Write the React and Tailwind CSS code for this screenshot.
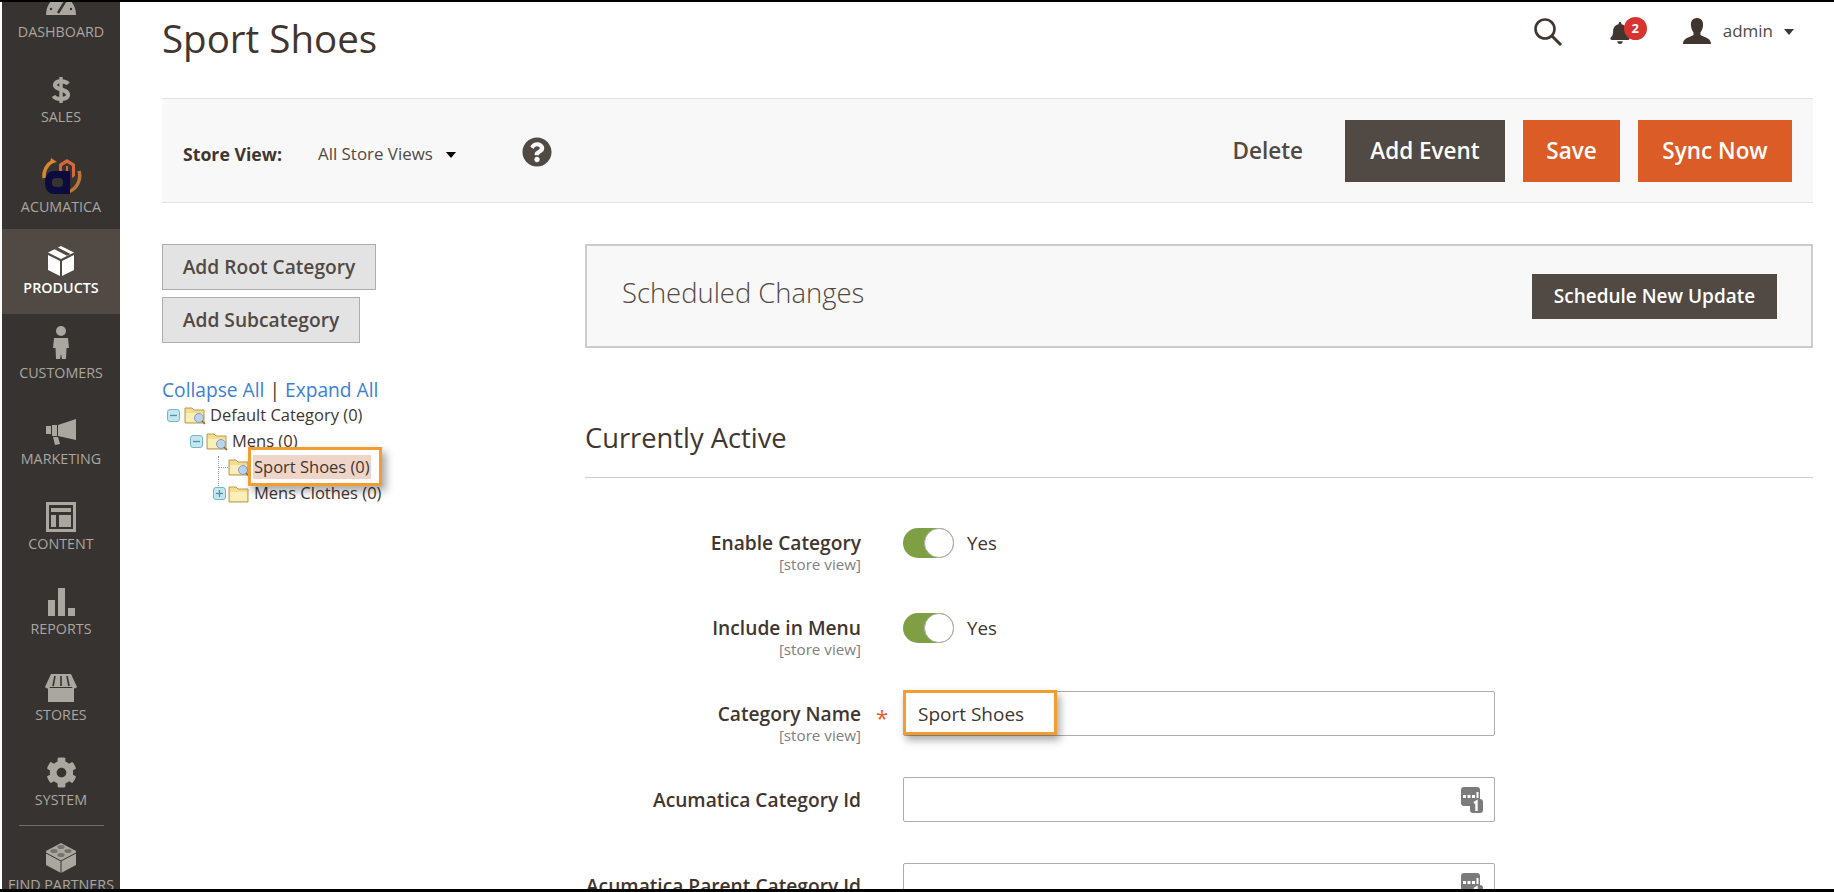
import React from 'react';
import { FaBell, FaCog, FaQuestionCircle } from 'react-icons/fa';

const GRAY = '#aaa6a0';

// Sidebar drawings
const Gauge = () => (
  <svg width="32" height="36" viewBox="0 0 32 36">
    <path d="M1 28 C1 18 7 10 16 10 C25 10 31 18 31 28 Z" fill={GRAY} />
    <path d="M13 26 L21 13" stroke="#373330" strokeWidth="2.5" />
    <circle cx="6" cy="22" r="1.2" fill="#373330" />
    <circle cx="26" cy="22" r="1.2" fill="#373330" />
  </svg>
);

const Dollar = () => (
  <svg width="20" height="30" viewBox="0 0 20 30">
    <path d="M17 9 C15 6 5 5 4 9.5 C3 15 17 13.5 17 20 C17 25 5 25 2.5 21" fill="none" stroke={GRAY} strokeWidth="4.2" />
    <path d="M10 2 V28" stroke={GRAY} strokeWidth="3.4" />
  </svg>
);

const AcumaticaLogo = () => (
  <svg width="42" height="40" viewBox="0 0 42 40">
    <path d="M4 22 A17 17 0 0 1 13 5" fill="none" stroke="#d9862f" strokeWidth="3.5" />
    <path d="M11 2 L17 6 L10 8 Z" fill="#d9862f" />
    <path d="M39 15 A17 17 0 0 1 28 36" fill="none" stroke="#b9783a" strokeWidth="3.5" />
    <path d="M19 8 L27 3 L35 8 V20 L32 22 V10 L27 7 L22 10 V20 L19 18 Z" fill="#d5673a" />
    <path d="M26 10 V24 L28 23 V10 Z" fill="#d5673a" />
    <path d="M14 15 H30 V38 H14 C8 38 5 33 5 27 C5 20 8 15 14 15 Z" fill="#0d0b3e" />
    <rect x="12" y="22" width="11" height="9" rx="4" fill="#373330" />
  </svg>
);

const Box = () => (
  <svg width="28" height="30" viewBox="0 0 28 30">
    <path d="M14 0 L27 6.5 L14 13 L1 6.5 Z" fill="#fff" />
    <path d="M7 3 L20 9.8 L23.5 8 L10.5 1.3 Z" fill="#514943" />
    <path d="M1 9 L13 15 V30 L1 24 Z" fill="#fff" />
    <path d="M15 15 L27 9 V24 L15 30 Z" fill="#fff" />
  </svg>
);

const Person = () => (
  <svg width="18" height="33" viewBox="0 0 18 33" className="mb-[8px]">
    <circle cx="9" cy="5" r="5" fill={GRAY} />
    <path d="M2 12 H16 L17 22 H14.5 L14 33 H10 L9 28 L8 33 H4 L3.5 22 H1 Z" fill={GRAY} />
  </svg>
);

const Megaphone = () => (
  <svg width="30" height="26" viewBox="0 0 30 26">
    <path d="M30 0 V21 L12 17 V6 Z" fill={GRAY} />
    <rect x="0" y="7" width="5" height="8" fill={GRAY} />
    <rect x="6" y="6" width="5" height="11" fill={GRAY} />
    <path d="M7 18 H12 L14 25 L9 26 Z" fill={GRAY} />
  </svg>
);

const Layout = () => (
  <svg width="30" height="30" viewBox="0 0 30 30">
    <path d="M0 0 H30 V30 H0 Z M3 3 V27 H27 V3 Z" fill={GRAY} fillRule="evenodd" />
    <rect x="5" y="6" width="20" height="4" fill={GRAY} />
    <rect x="5" y="13" width="5" height="12" fill={GRAY} />
    <rect x="13" y="13" width="12" height="12" fill={GRAY} />
  </svg>
);

const Bars = () => (
  <svg width="28" height="28" viewBox="0 0 28 28">
    <rect x="1" y="12" width="7" height="16" fill={GRAY} />
    <rect x="11" y="0" width="7" height="28" fill={GRAY} />
    <rect x="21" y="20" width="7" height="8" fill={GRAY} />
  </svg>
);

const Store = () => (
  <svg width="34" height="28" viewBox="0 0 34 28">
    <path d="M7 0 H27 L33 13 C31 15 29 15 28 13 H6 C5 15 3 15 1 13 Z" fill={GRAY} />
    <path d="M11 2 L9 12 M17 2 V12 M23 2 L25 12" stroke="#373330" strokeWidth="1.6" />
    <rect x="4" y="14" width="26" height="14" fill={GRAY} />
  </svg>
);

const Lego = () => (
  <svg width="32" height="32" viewBox="0 0 32 32">
    <path d="M16 1 L31 9 V23 L16 31 L1 23 V9 Z" fill={GRAY} />
    <path d="M1 11 L16 19 L31 11 M16 19 V31" fill="none" stroke="#373330" strokeWidth="1" />
    <ellipse cx="16" cy="5" rx="3.6" ry="2" fill="#373330" opacity=".45" />
    <ellipse cx="9" cy="9" rx="3.6" ry="2" fill="#373330" opacity=".45" />
    <ellipse cx="23" cy="9" rx="3.6" ry="2" fill="#373330" opacity=".45" />
    <ellipse cx="16" cy="13" rx="3.6" ry="2" fill="#373330" opacity=".45" />
  </svg>
);

const NAV = [
  { label: 'Dashboard', icon: <Gauge /> },
  { label: 'Sales', icon: <Dollar /> },
  { label: 'Acumatica', icon: <AcumaticaLogo />, lower: true },
  { label: 'Products', icon: <Box />, active: true },
  { label: 'Customers', icon: <Person /> },
  { label: 'Marketing', icon: <Megaphone /> },
  { label: 'Content', icon: <Layout /> },
  { label: 'Reports', icon: <Bars /> },
  { label: 'Stores', icon: <Store /> },
  { label: 'System', icon: <FaCog size={31} color={GRAY} />, divider: true },
  { label: 'Find Partners', icon: <Lego /> },
];

// Tree drawings
const Folder = ({ zoomed }) => (
  <svg width="22" height="20" viewBox="0 0 22 20" className="shrink-0">
    <path d="M1 3 H8 L10 5 H20 V18 H1 Z" fill="#f5dc8e" stroke="#b79a4e" strokeWidth="1" />
    <path d="M2 8 H19 V17 H2 Z" fill="#fbeeb8" />
    {zoomed && (
      <>
        <circle cx="15" cy="13" r="4.5" fill="#bcd3ea" stroke="#7f9cc0" />
        <path d="M18 16 L21 19" stroke="#8a6a48" strokeWidth="1.6" />
      </>
    )}
  </svg>
);

const Toggle = ({ plus }) => (
  <svg width="13" height="13" viewBox="0 0 13 13" className="shrink-0">
    <rect x="0.5" y="0.5" width="12" height="12" rx="2.5" fill="#c5e6ee" stroke="#6fb9cb" />
    <path d="M3 6.5 H10" stroke="#4d93a8" strokeWidth="1.3" />
    {plus && <path d="M6.5 3 V10" stroke="#4d93a8" strokeWidth="1.3" />}
  </svg>
);

const Translate = () => (
  <svg width="22" height="26" viewBox="0 0 22 26">
    <rect x="0" y="0" width="19" height="19" rx="3" fill="#7b7b7b" />
    <rect x="2" y="8" width="3" height="3" fill="#fff" />
    <rect x="6.5" y="8" width="3" height="3" fill="#fff" />
    <rect x="11" y="8" width="3" height="3" fill="#fff" />
    <rect x="15.5" y="5" width="2" height="6" fill="#fff" />
    <rect x="9" y="12" width="13" height="14" rx="3" fill="#7b7b7b" />
    <path d="M13 16 L15.5 14.5 V24" fill="none" stroke="#fff" strokeWidth="2.4" />
  </svg>
);

const StoreLabel = ({ text, top }) => (
  <div className={`w-[276px] shrink-0 text-right ${top}`}>
    <div className="text-[19.2px] leading-[30px] font-semibold text-[#41362f]">{text}</div>
    <div className="text-[15.2px] leading-[13px] text-[#808080]">[store view]</div>
  </div>
);

const Switch = () => (
  <div className="flex items-center gap-[13px] ml-[42px]">
    <div className="w-[51px] h-[30px] rounded-full bg-[#7f9f45] flex justify-end">
      <div className="w-[30px] h-[30px] rounded-full bg-white border border-[#adadad]"></div>
    </div>
    <span className="text-[18.7px] text-[#41362f]">Yes</span>
  </div>
);

export default function App() {
  return (
    <div className="w-[1834px] h-[892px] overflow-hidden bg-black pt-[2px] pb-[3px] font-['Open_Sans',sans-serif]">
      <div className="flex h-full bg-white overflow-hidden">
        {/* SIDEBAR */}
        <div className="w-[118px] ml-[2px] shrink-0 bg-[#373330] overflow-hidden h-full">
          <div className="mt-[-29px]">
            {NAV.map((item) => (
              <div key={item.label} className={`h-[85.33px] pt-[14px] flex flex-col items-center relative ${item.active ? 'bg-[#514943]' : ''}`}>
                <div className="h-[36px] flex items-center justify-center">{item.icon}</div>
                <div className={`text-[14.3px] leading-[18px] uppercase whitespace-nowrap ${item.active ? 'text-white font-semibold' : 'text-[#aaa6a0]'} ${item.lower ? 'mt-[4px]' : ''}`}>{item.label}</div>
                {item.divider && <div className="absolute bottom-0 left-[17px] right-[16px] h-px bg-[#736d67]"></div>}
              </div>
            ))}
          </div>
        </div>

        {/* MAIN */}
        <div className="flex-1 min-w-0 pl-[42px] pr-[21px]">
          <div className="h-[96px] flex justify-between items-start">
            <h1 className="text-[38.5px] leading-[52px] mt-[10px] text-[#41362f]">Sport Shoes</h1>
            <div className="flex items-center mt-[15px] mr-[19px] text-[#41362f]">
              <svg width="30" height="30" viewBox="0 0 30 30" className="mr-[46px]">
                <circle cx="12" cy="12" r="9.5" fill="none" stroke="#41362f" strokeWidth="2.6" />
                <path d="M19 19 L28 28" stroke="#41362f" strokeWidth="3" />
              </svg>
              <div className="relative mr-[52px] w-[22px] h-[24px] top-[2px]">
                <FaBell size={22} color="#41362f" />
                <div className="absolute top-[-5px] left-[15px] w-[23px] h-[23px] rounded-full bg-[#d8342f] text-white text-[13px] font-bold flex items-center justify-center">2</div>
              </div>
              <svg width="28" height="26" viewBox="0 0 28 26" className="mr-[12px] mb-[2px]">
                <path d="M14 0 C19 0 20.5 4 20 8 C19.7 11 18.5 13 17.5 14.5 V17 C21 19 28 20 28 26 H0 C0 20 7 19 10.5 17 V14.5 C9.5 13 8.3 11 8 8 C7.5 4 9 0 14 0 Z" fill="#41362f" />
              </svg>
              <span className="text-[17px] text-[#514943] mb-[2px]">admin</span>
              <div className="ml-[11px] w-0 h-0 border-x-[5px] border-x-transparent border-t-[6px] border-t-[#41362f]"></div>
            </div>
          </div>

          {/* TOOLBAR */}
          <div className="h-[105px] bg-[#f8f8f8] border-y border-[#e3e3e3] flex items-center justify-between pl-[21px] pr-[21px]">
            <div className="flex items-center mt-[7px]">
              <span className="text-[17.7px] font-bold text-[#41362f] w-[135px]">Store View:</span>
              <span className="text-[16.9px] text-[#514943]">All Store Views</span>
              <div className="ml-[13px] mt-[2px] w-0 h-0 border-x-[5.5px] border-x-transparent border-t-[6px] border-t-black"></div>
              <FaQuestionCircle size={30} color="#514943" className="ml-[66px] mb-[4px]" />
            </div>
            <div className="flex items-center">
              <span className="text-[22.5px] font-semibold text-[#514943] mr-[42px]">Delete</span>
              <button className="w-[160px] h-[62px] bg-[#514943] text-white text-[22.5px] font-semibold mr-[18px]">Add Event</button>
              <button className="w-[97px] h-[62px] bg-[#db5c26] text-white text-[22.5px] font-semibold mr-[18px]">Save</button>
              <button className="w-[154px] h-[62px] bg-[#db5c26] text-white text-[22.5px] font-semibold">Sync Now</button>
            </div>
          </div>

          <div className="flex mt-[41px]">
            {/* CATEGORY TREE */}
            <div className="w-[423px] shrink-0">
              <div className="flex flex-col items-start gap-[7px]">
                <button className="w-[214px] h-[46px] pt-px bg-[#e3e3e3] border border-[#adadad] text-[19.2px] font-semibold text-[#514943]">Add Root Category</button>
                <button className="w-[198px] h-[46px] bg-[#e3e3e3] border border-[#adadad] text-[19.2px] font-semibold text-[#514943]">Add Subcategory</button>
              </div>
              <div className="mt-[35px] text-[19.2px] leading-[24px] text-[#3d7fd1]">
                Collapse All <span className="text-[#41362f]">|</span> Expand All
              </div>
              <div className="text-[16.5px] text-[#41362f]">
                <div className="h-[26px] flex items-center pl-[5px]">
                  <Toggle /><span className="w-[4px]"></span><Folder zoomed /><span className="ml-[4px]">Default Category (0)</span>
                </div>
                <div className="h-[26px] flex items-center pl-[28px]">
                  <Toggle /><span className="w-[3px]"></span><Folder zoomed /><span className="ml-[4px]">Mens (0)</span>
                </div>
                <div className="h-[26px] flex items-center pl-[66px] relative">
                  <div className="absolute left-[56px] top-[2px] h-[30px] border-l border-dotted border-[#999]"></div>
                  <div className="absolute left-[56px] top-[13px] w-[10px] border-t border-dotted border-[#999]"></div>
                  <Folder zoomed />
                  <span className="ml-[3px] bg-[#efd5c8] px-px leading-[24px] relative z-10 whitespace-nowrap">Sport Shoes (0)</span>
                  <div className="absolute left-[86px] top-[-7px] w-[134px] h-[39px] border-[3px] border-[#f39c2f] shadow-[4px_5px_8px_rgba(0,0,0,0.35)] z-10"></div>
                </div>
                <div className="h-[27px] flex items-center pl-[51px]">
                  <Toggle plus /><span className="w-[2px]"></span><Folder /><span className="ml-[4px]">Mens Clothes (0)</span>
                </div>
              </div>
            </div>

            {/* FORM */}
            <div className="flex-1 min-w-0">
              <div className="h-[104px] bg-[#f8f8f8] border-2 border-[#cccccc] flex items-center justify-between pl-[35px] pr-[34px]">
                <span className="text-[27.4px] font-light text-[#514943] mb-[7px]">Scheduled Changes</span>
                <button className="w-[245px] h-[45px] bg-[#514943] text-white text-[19px] font-semibold">Schedule New Update</button>
              </div>
              <h2 className="mt-[70px] h-[60px] text-[27.3px] leading-[40px] text-[#41362f] border-b border-[#cccccc]">Currently Active</h2>

              <div className="mt-[50px] h-[85px] flex items-start">
                <StoreLabel text="Enable Category" top="" />
                <Switch />
              </div>
              <div className="h-[78px] flex items-start">
                <StoreLabel text="Include in Menu" top="" />
                <Switch />
              </div>
              <div className="h-[86px] flex items-start">
                <StoreLabel text="Category Name" top="pt-[8px]" />
                <div className="w-[42px] pl-[15px] pt-[11px] text-[22px] leading-[30px] text-[#e85a2c]">*</div>
                <div className="w-[592px] h-[45px] border border-[#adadad] rounded-[2px] flex items-center pl-[14px] pt-[2px] text-[19px] text-[#41362f] relative">
                  Sport Shoes
                  <div className="absolute left-[-1px] top-[-2px] w-[154px] h-[45px] border-[3px] border-[#f39c2f] shadow-[3px_5px_8px_rgba(0,0,0,0.35)]"></div>
                </div>
              </div>
              <div className="h-[86px] flex items-start">
                <div className="w-[276px] shrink-0 text-right text-[19.2px] leading-[30px] font-semibold text-[#41362f] pt-[8px]">Acumatica Category Id</div>
                <div className="ml-[42px] w-[592px] h-[45px] border border-[#adadad] rounded-[2px] flex items-center justify-end pr-[11px]"><Translate /></div>
              </div>
              <div className="h-[45px] flex items-start">
                <div className="w-[276px] shrink-0 text-right text-[19.2px] leading-[30px] font-semibold text-[#41362f] pt-[8px] whitespace-nowrap flex justify-end">Acumatica Parent Category Id</div>
                <div className="ml-[42px] w-[592px] h-[45px] border border-[#adadad] rounded-[2px] flex items-center justify-end pr-[11px]"><Translate /></div>
              </div>
            </div>
          </div>
        </div>
      </div>
    </div>
  );
}
